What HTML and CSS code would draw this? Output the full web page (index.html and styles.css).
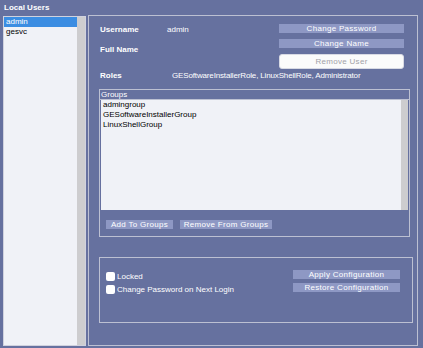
FILE: index.html
```html
<!DOCTYPE html>
<html lang="en">
<head>
    <meta charset="UTF-8">
    <title>Local Users</title>
    <link rel="stylesheet" href="styles.css">
</head>
<body>
    <div class="title">Local Users</div>
    <div class="main">
        <div class="user-list">
            <div class="items">
                <div class="item selected">admin</div>
                <div class="item">gesvc</div>
            </div>
            <div class="scroll"></div>
        </div>

        <div class="details">
            <div class="top">
                <div class="fields">
                    <div class="field">
                        <span class="label">Username</span>
                        <span class="value">admin</span>
                    </div>
                    <div class="field">
                        <span class="label">Full Name</span>
                        <span class="value"></span>
                    </div>
                </div>
                <div class="actions">
                    <button class="btn">Change Password</button>
                    <button class="btn">Change Name</button>
                    <button class="btn btn-white">Remove User</button>
                </div>
            </div>
            <div class="field roles">
                <span class="label">Roles</span>
                <span class="value">GESoftwareInstallerRole, LinuxShellRole, Administrator</span>
            </div>

            <div class="groups">
                <div class="groups-title">Groups</div>
                <div class="group-list">
                    <div class="items">
                        <div class="item">admingroup</div>
                        <div class="item">GESoftwareInstallerGroup</div>
                        <div class="item">LinuxShellGroup</div>
                    </div>
                    <div class="scroll"></div>
                </div>
                <div class="group-actions">
                    <button class="btn btn-add">Add To Groups</button>
                    <button class="btn btn-remove">Remove From Groups</button>
                </div>
            </div>

            <div class="config">
                <div class="checks">
                    <label class="check"><span class="box"></span>Locked</label>
                    <label class="check"><span class="box"></span>Change Password on Next Login</label>
                </div>
                <div class="config-actions">
                    <button class="btn">Apply Configuration</button>
                    <button class="btn">Restore Configuration</button>
                </div>
            </div>
        </div>
    </div>
</body>
</html>
```

FILE: styles.css
```css
:root {
    --background: #66719f;
    --line: #bcc0d2;
    --list-background: #f0f2f7;
    --selected: #3b8de2;
    --scroll: #cdcdcf;
    --button: #8e98c4;
}

body {
    margin: 0;
    width: 423px;
    height: 348px;
    background-color: var(--background);
    font-family: "Liberation Sans", Arial, sans-serif;
    font-size: 8px;
    color: #fff;
    overflow: hidden;
}

.title {
    height: 12px;
    padding: 3px 0 0 4px;
    font-weight: bold;
    line-height: 10px;
}

.main {
    display: flex;
    gap: 2px;
    padding: 0 0 0 3px;
}

.user-list {
    display: flex;
    width: 81px;
    height: 328px;
    margin-top: 1px;
    border: 1px solid #d0d2de;
    background-color: var(--list-background);
    color: #000;
}

.items {
    flex: 1;
}

.item {
    height: 10px;
    padding-left: 2px;
    line-height: 10px;
}

.selected {
    background-color: var(--selected);
    color: #fff;
}

.scroll {
    width: 8px;
    background-color: var(--scroll);
}

.details {
    width: 330px;
    height: 331px;
    border: 1px solid var(--line);
    padding: 0 0 0 10px;
    box-sizing: border-box;
}

.top {
    display: flex;
    justify-content: space-between;
    padding: 8px 13px 0 1px;
}

.fields {
    display: flex;
    flex-direction: column;
    gap: 10px;
    padding-top: 1px;
}

.field {
    display: flex;
    height: 10px;
    line-height: 10px;
}

.label {
    width: 67px;
    font-weight: bold;
}

.actions {
    display: flex;
    flex-direction: column;
    gap: 6px;
    width: 125px;
}

.btn {
    height: 9px;
    padding: 0;
    border: none;
    background-color: var(--button);
    color: #fff;
    font-family: inherit;
    font-size: 8px;
    line-height: 9px;
    letter-spacing: 0.3px;
}

.btn-white {
    height: 15px;
    border: 1px solid #d8dae4;
    border-radius: 3px;
    background-color: #fbfbfb;
    color: #a2a2a8;
}

.roles {
    margin: 2px 0 0 1px;
}

.roles .label {
    width: 72px;
}

.roles .value {
    letter-spacing: -0.15px;
}

.groups {
    width: 311px;
    height: 148px;
    margin-top: 8px;
    border: 1px solid var(--line);
    box-sizing: border-box;
}

.groups-title {
    height: 9px;
    padding-left: 1px;
    border-bottom: 1px solid var(--line);
    line-height: 9px;
}

.group-list {
    display: flex;
    height: 110px;
    margin: 0 1px;
    background-color: var(--list-background);
    color: #000;
}

.group-list .scroll {
    width: 7px;
}

.group-actions {
    display: flex;
    gap: 7px;
    padding: 10px 0 0 6px;
}

.btn-add {
    width: 67px;
}

.btn-remove {
    width: 92px;
}

.config {
    display: flex;
    justify-content: space-between;
    width: 314px;
    height: 66px;
    margin-top: 20px;
    padding: 12px 12px 0 6px;
    border: 1px solid var(--line);
    box-sizing: border-box;
}

.checks {
    display: flex;
    flex-direction: column;
    gap: 4px;
}

.check {
    display: flex;
    align-items: center;
    gap: 2px;
    height: 9px;
    line-height: 9px;
}

.box {
    width: 9px;
    height: 9px;
    border-radius: 2px;
    background-color: #fff;
}

.check:first-child {
    padding-top: 2px;
}

.config-actions {
    display: flex;
    flex-direction: column;
    gap: 4px;
    width: 107px;
}
```
